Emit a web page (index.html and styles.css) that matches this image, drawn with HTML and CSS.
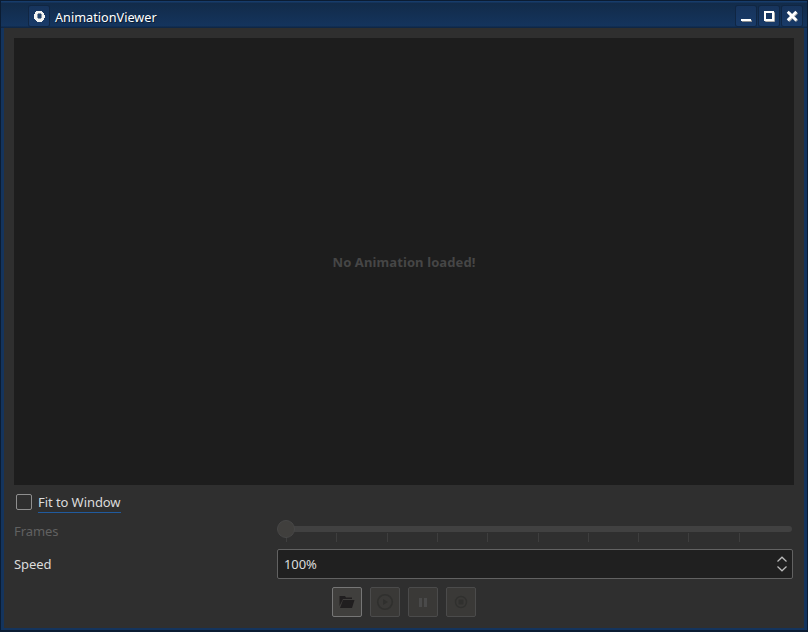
FILE: index.html
```html
<!DOCTYPE html>
<html lang="en">
<head>
<meta charset="utf-8">
<title>AnimationViewer</title>
<link rel="stylesheet" href="styles.css">
</head>
<body>
<div class="window">
  <header class="titlebar">
    <span class="tbtn app"><svg viewBox="0 0 20 20"><path d="M7 5h6v1h1v1h1v2h1v3h-1v2h-1v1h-1v1H8v-1H7v-1H6v-1H5V8h1V6h1z" fill="#f5f5f2"/><path d="M8 8h1V7h3v1h1v4h-1v1H9v-1H8z" fill="#8793a2"/><path d="M9 8h3v4H9z" fill="#24456e"/></svg></span>
    <h1 class="title">AnimationViewer</h1>
    <span class="tbtn"><svg viewBox="0 0 20 20"><path d="M6 14h10v2H6z" fill="#8b8e90"/><path d="M5 13h10v2H5z" fill="#fff"/></svg></span>
    <span class="tbtn"><svg viewBox="0 0 20 20"><path d="M6.500 6.500h9v9h-9z" fill="none" stroke="#b0afab"/><path d="M6 6h8v8H6z" fill="none" stroke="#fff" stroke-width="2"/></svg></span>
    <span class="tbtn"><svg viewBox="0 0 20 20"><path d="M6.500 6.500l8.500 8.500M15 6.500L6.500 15" stroke="#a0a3a6" stroke-width="3"/><path d="M5.700 5.700l8.600 8.600M14.300 5.700l-8.600 8.600" stroke="#fff" stroke-width="2.700"/></svg></span>
  </header>
  <main class="content">
    <section class="viewer">No Animation loaded!</section>
    <label class="fit"><span class="box"></span><span class="fit-text">Fit to Window</span></label>
    <div class="row frames">
      <span class="label">Frames</span>
      <svg class="slider" viewBox="0 0 516 24">
        <rect x="4" y="8" width="511" height="6" rx="3" fill="#414141"/>
        <path d="M9.500 15v9M59.500 15v9M110.500 15v9M160.500 15v9M210.500 15v9M261.500 15v9M311.500 15v9M361.500 15v9M411.500 15v9M462.500 15v9" stroke="#3e3e3e"/>
        <circle cx="9" cy="11" r="8.500" fill="#403f3d" stroke="#474747"/>
      </svg>
    </div>
    <div class="row speed">
      <span class="label">Speed</span>
      <div class="spin"><span>100%</span><svg viewBox="0 0 12 16"><path d="M1.500 5.500L6 1.200l4.500 4.300M1.500 10.500L6 14.800l4.500-4.300" fill="none" stroke="#bcbcbc" stroke-width="1.200"/></svg></div>
    </div>
    <div class="buttons">
      <button class="btn on"><svg viewBox="0 0 28 28"><path d="M6.500 18V8H12l1 1.500h6V11h-9z" fill="#201e1f"/><path d="M10 12h11.500l-2.500 8H7z" fill="#201e1f"/></svg></button>
      <button class="btn"><svg viewBox="0 0 28 28"><circle cx="14" cy="14" r="7.300" fill="none" stroke="#30302e" stroke-width="1.600"/><path d="M12 11v6l5-3z" fill="#30302e"/></svg></button>
      <button class="btn"><svg viewBox="0 0 28 28"><path d="M10 10h3v9h-3zM15 10h3v9h-3z" fill="#4a4a4a"/></svg></button>
      <button class="btn"><svg viewBox="0 0 28 28"><circle cx="14" cy="14" r="5.500" fill="none" stroke="#30302e" stroke-width="1.400"/><rect x="11.500" y="11.500" width="5" height="5" rx="1" fill="#30302e"/></svg></button>
    </div>
  </main>
</div>
</body>
</html>
```

FILE: styles.css
```css
* { box-sizing: border-box; }
body { margin: 0; background: #0a1b30; font: 13px/18px "Noto Sans", sans-serif; letter-spacing: -0.07px; color: #dcdcdc; }
svg { display: block; }
.window { width: 808px; height: 632px; padding: 1px 1px 2px; background: #0b1c32; }
.titlebar { height: 27px; display: flex; align-items: center; gap: 3px; padding: 2px 5px 0 28px; background: linear-gradient(#173c6b 0 1px, #122b49 2px, #14345d 25px, #0f2746 26px); }
.tbtn { width: 20px; height: 20px; border-radius: 2px; background: linear-gradient(#17345c, #193b69); box-shadow: 0 0 0 1px #102643; }
.tbtn svg { width: 20px; height: 20px; }
.title { flex: 1; margin: 2px 0 0 3px; font: 12.7px/18px "Noto Sans", sans-serif; letter-spacing: 0; color: #fff; text-shadow: 1px 1px 0 #0b1c32; }
.content { height: 602px; border: solid #14345d; border-width: 0 3px 2px; background: #2f2f2f; padding: 10px 10px 0; }
.viewer { height: 447px; display: flex; align-items: center; justify-content: center; background: #1d1d1d; color: #464646; font-weight: 700; letter-spacing: 0.1px; }
.fit { height: 34px; display: flex; align-items: center; gap: 6px; padding-left: 2px; }
.box { width: 16px; height: 16px; border: 1px solid #8f8f8f; border-radius: 2px; }
.fit-text { height: 20px; margin-top: 2px; border-bottom: 1px solid #205b9f; }
.row { display: grid; grid-template-columns: 263px 516px; }
.frames { height: 30px; color: #616161; }
.frames .label { padding-top: 3px; }
.slider { width: 516px; height: 24px; margin-top: -1px; }
.speed { align-items: center; }
.spin { height: 30px; display: flex; align-items: center; justify-content: space-between; padding: 0 4px 0 6px; border: 1px solid #626262; border-radius: 2px; background: #202020; }
.spin svg { width: 12px; height: 16px; }
.buttons { display: flex; gap: 8px; margin: 8px 0 0 318px; }
.btn { width: 30px; height: 30px; padding: 0; border: 1px solid #4b4b4b; border-radius: 2px; background: #3a3937; }
.btn.on { border-color: #767676; background: #403f3d; }
.btn svg { width: 28px; height: 28px; }
```
